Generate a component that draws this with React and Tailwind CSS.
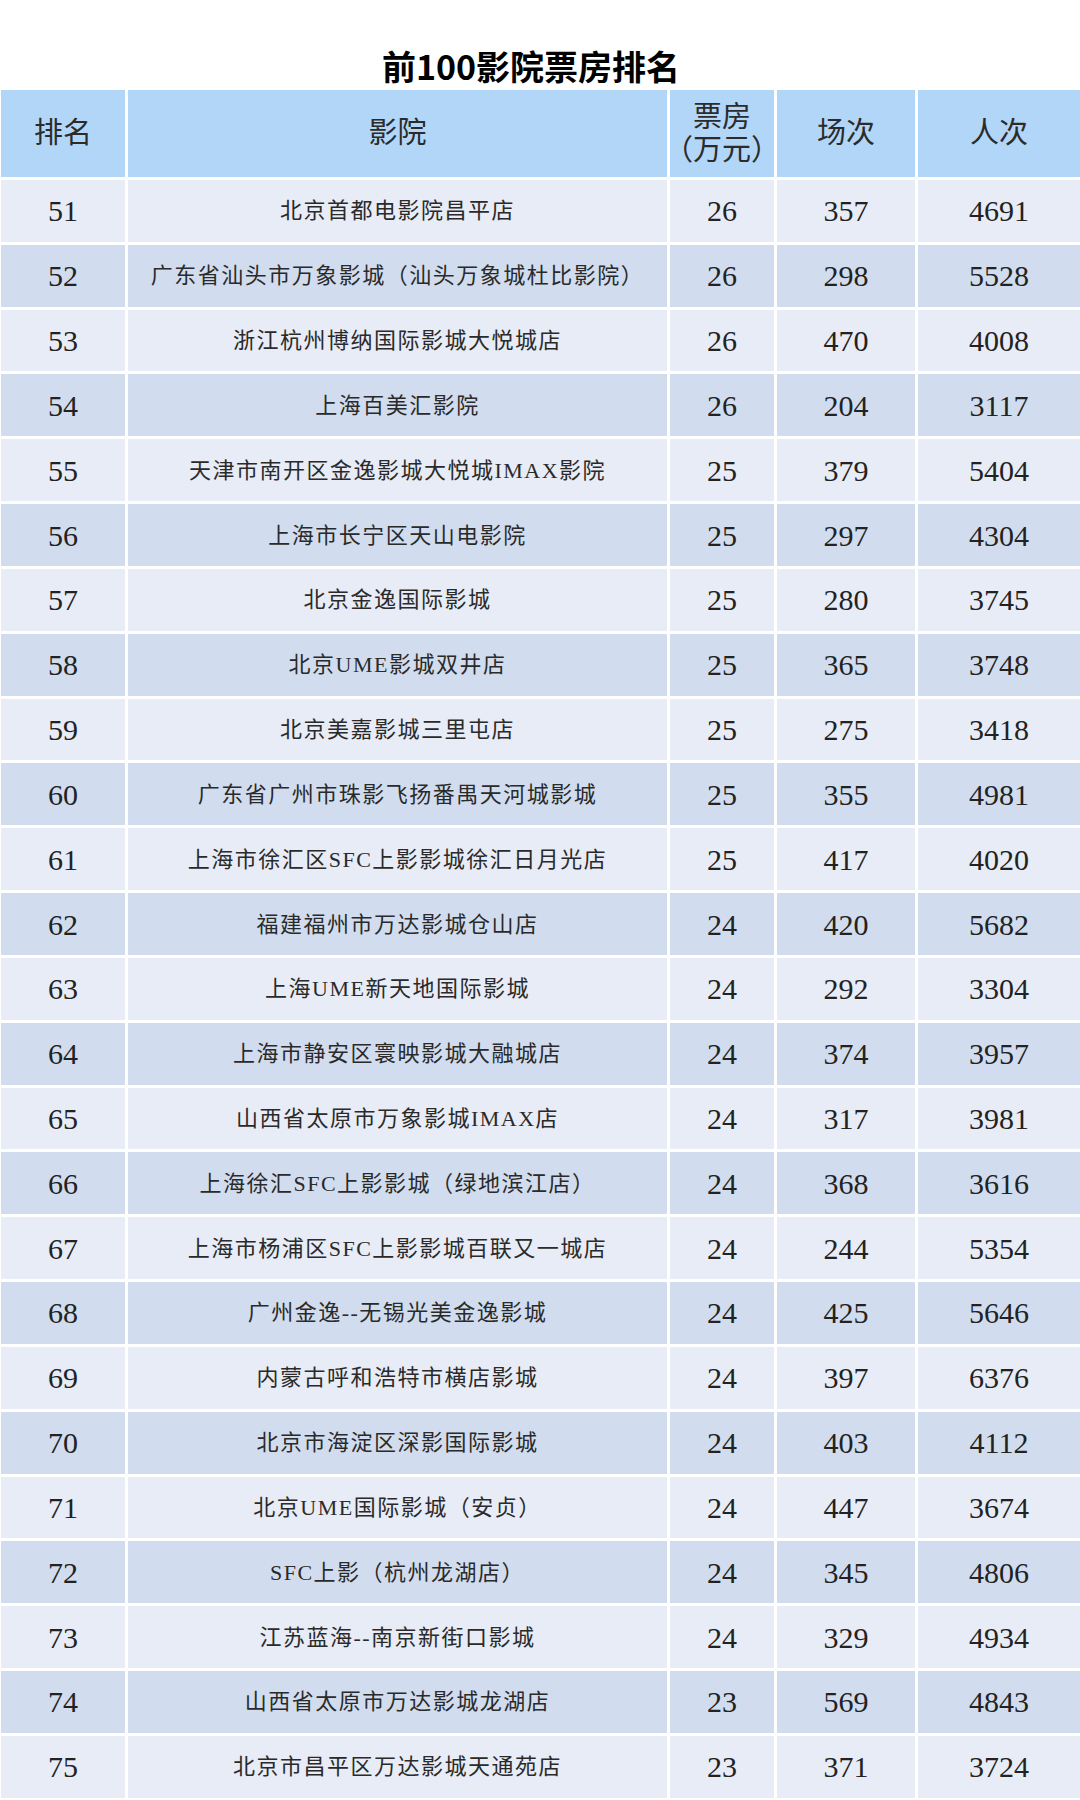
import React from 'react';

const rows = [
  [51, '北京首都电影院昌平店', 26, 357, 4691],
  [52, '广东省汕头市万象影城（汕头万象城杜比影院）', 26, 298, 5528],
  [53, '浙江杭州博纳国际影城大悦城店', 26, 470, 4008],
  [54, '上海百美汇影院', 26, 204, 3117],
  [55, '天津市南开区金逸影城大悦城IMAX影院', 25, 379, 5404],
  [56, '上海市长宁区天山电影院', 25, 297, 4304],
  [57, '北京金逸国际影城', 25, 280, 3745],
  [58, '北京UME影城双井店', 25, 365, 3748],
  [59, '北京美嘉影城三里屯店', 25, 275, 3418],
  [60, '广东省广州市珠影飞扬番禺天河城影城', 25, 355, 4981],
  [61, '上海市徐汇区SFC上影影城徐汇日月光店', 25, 417, 4020],
  [62, '福建福州市万达影城仓山店', 24, 420, 5682],
  [63, '上海UME新天地国际影城', 24, 292, 3304],
  [64, '上海市静安区寰映影城大融城店', 24, 374, 3957],
  [65, '山西省太原市万象影城IMAX店', 24, 317, 3981],
  [66, '上海徐汇SFC上影影城（绿地滨江店）', 24, 368, 3616],
  [67, '上海市杨浦区SFC上影影城百联又一城店', 24, 244, 5354],
  [68, '广州金逸--无锡光美金逸影城', 24, 425, 5646],
  [69, '内蒙古呼和浩特市横店影城', 24, 397, 6376],
  [70, '北京市海淀区深影国际影城', 24, 403, 4112],
  [71, '北京UME国际影城（安贞）', 24, 447, 3674],
  [72, 'SFC上影（杭州龙湖店）', 24, 345, 4806],
  [73, '江苏蓝海--南京新街口影城', 24, 329, 4934],
  [74, '山西省太原市万达影城龙湖店', 23, 569, 4843],
  [75, '北京市昌平区万达影城天通苑店', 23, 371, 3724],
];

const serif = "font-['Liberation_Serif','Noto_Sans_CJK_SC',serif]";

const HeaderCell = ({ children }) => (
  <div className={`bg-[#b2d6f8] flex flex-col items-center justify-center text-[29px] text-[#2b2b2b] leading-[33px] whitespace-nowrap ${serif}`}>
    {children}
  </div>
);

export default function App() {
  return (
    <div className="w-[1080px] h-[1800px] bg-white overflow-hidden">
      {/* title */}
      <div className="h-[90px] flex items-end justify-center pb-[7px] pr-[18px]">
        <h1 className="text-[34px] leading-[34px] font-bold text-black font-['Noto_Sans_CJK_SC',sans-serif]">
          前100影院票房排名
        </h1>
      </div>

      <div className="ml-[1px] grid grid-cols-[124px_539px_104px_138px_162px] grid-rows-[87px] auto-rows-[61.83px] gap-[3px]">
        <HeaderCell>排名</HeaderCell>
        <HeaderCell>影院</HeaderCell>
        <HeaderCell>
          <span>票房</span>
          <span>（万元）</span>
        </HeaderCell>
        <HeaderCell>场次</HeaderCell>
        <HeaderCell>人次</HeaderCell>

        {rows.map((r, i) => {
          const bg = i % 2 === 0 ? 'bg-[#e8ecf6]' : 'bg-[#d1ddee]';
          return (
            <React.Fragment key={r[0]}>
              <div className={`${bg} flex items-center justify-center text-[30px] text-[#222] ${serif}`}>{r[0]}</div>
              <div className={`${bg} flex items-center justify-center text-[22px] tracking-[1.5px] text-[#2a2a2a] whitespace-nowrap ${serif}`}>{r[1]}</div>
              <div className={`${bg} flex items-center justify-center text-[30px] text-[#222] ${serif}`}>{r[2]}</div>
              <div className={`${bg} flex items-center justify-center text-[30px] text-[#222] ${serif}`}>{r[3]}</div>
              <div className={`${bg} flex items-center justify-center text-[30px] text-[#222] ${serif}`}>{r[4]}</div>
            </React.Fragment>
          );
        })}
      </div>
    </div>
  );
}
